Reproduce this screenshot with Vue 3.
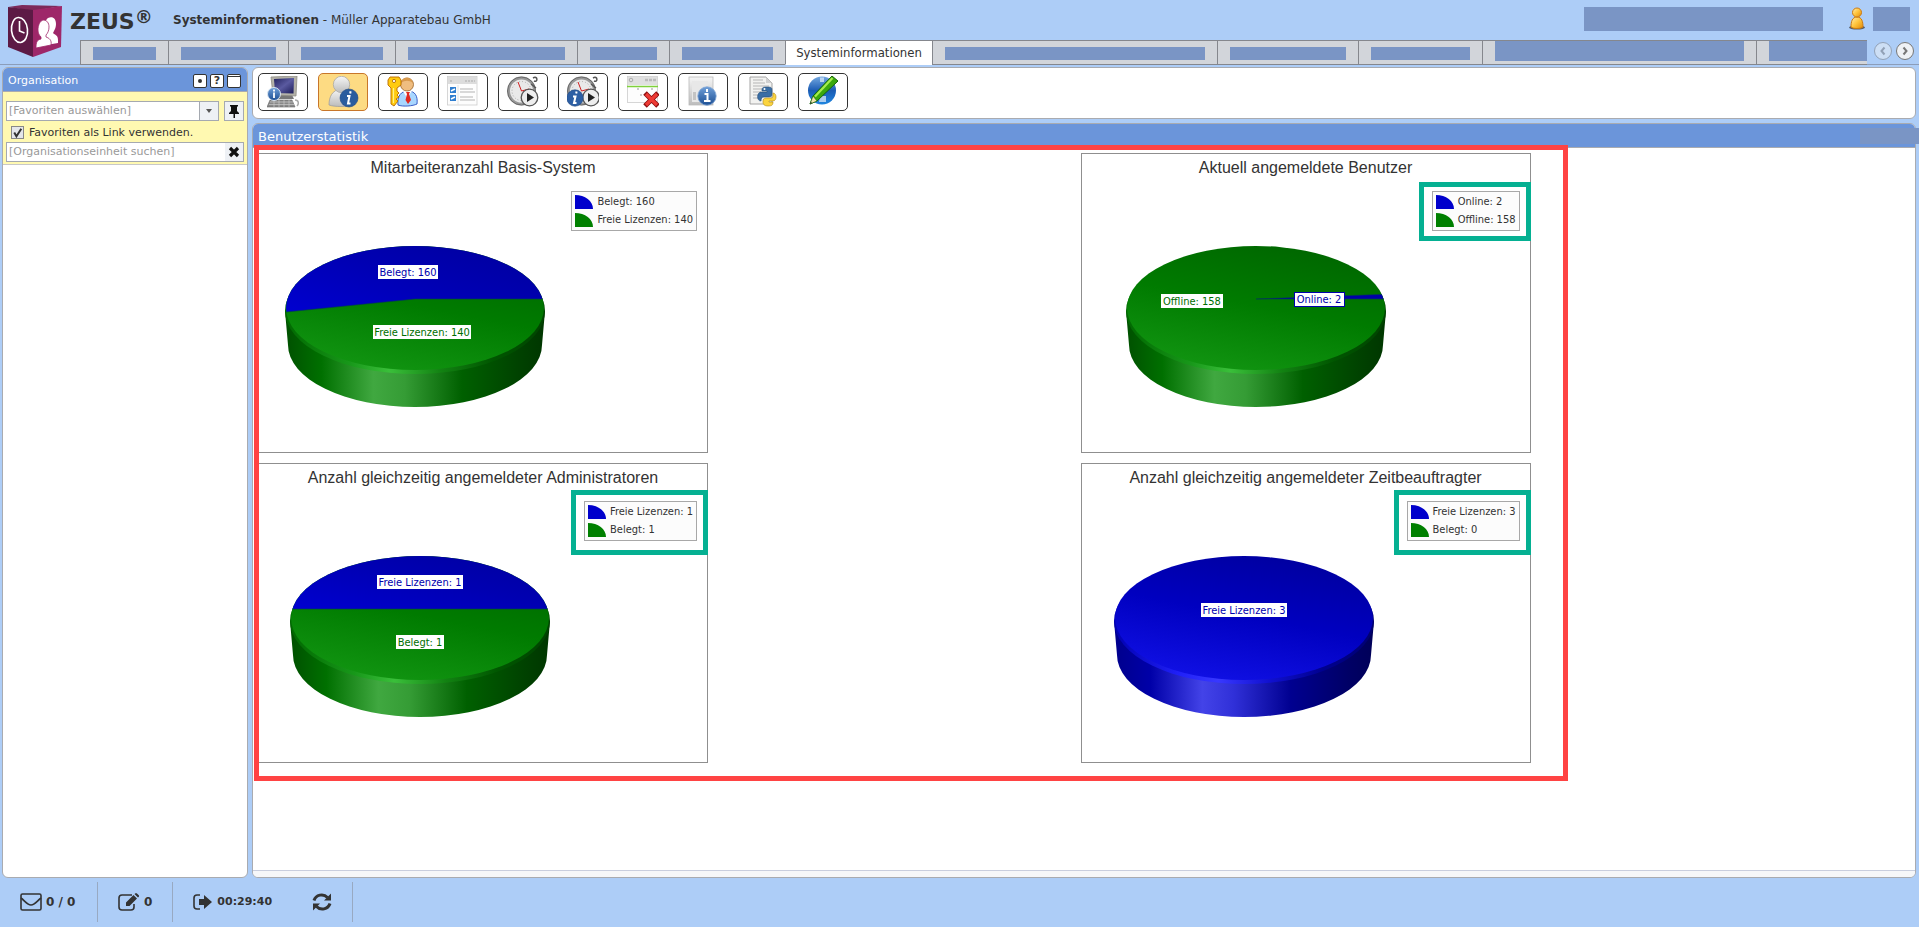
<script setup>
import { ref } from 'vue'

const tabs = [
  { bar: 63 }, { bar: 95 }, { bar: 82 }, { bar: 157 }, { bar: 67 }, { bar: 91 },
  { label: 'Systeminformationen' },
  { bar: 260 }, { bar: 116 }, { bar: 99 }, { bar: 249, tall: true }, { bar: 99, tall: true },
]

const tools = [
  'Systeminformationen', 'Benutzerstatistik', 'Lizenzen', 'Optionen', 'Jobs starten',
  'Jobinformationen', 'Fenster schließen', 'Serverinformationen', 'Skripte', 'Informationen bearbeiten',
]
const activeTool = ref(1)
const asLink = ref(true)
const search = ref('')

const charts = [
  {
    title: 'Mitarbeiteranzahl Basis-System', cx: 157, base: 'green',
    slice: 'M157 146H286V80H20V163L28 159Z',
    legend: ['Belegt: 160', 'Freie Lizenzen: 140'],
    labels: [
      { t: 'Belegt: 160', x: 150, y: 119, w: 60, c: 'blue' },
      { t: 'Freie Lizenzen: 140', x: 164, y: 179, w: 98, c: 'green' },
    ],
  },
  {
    title: 'Aktuell angemeldete Benutzer', cx: 175, base: 'green', mark: 'compact',
    slice: 'M175 146L310 141V146Z',
    legend: ['Online: 2', 'Offline: 158'],
    labels: [
      { t: 'Offline: 158', x: 111, y: 148, w: 62, c: 'green' },
      { t: 'Online: 2', x: 238, y: 146, w: 50, c: 'blue', framed: true },
    ],
  },
  {
    title: 'Anzahl gleichzeitig angemeldeter Administratoren', cx: 162, base: 'green', mark: 'tall',
    slice: 'M20 146H300V80H20Z',
    legend: ['Freie Lizenzen: 1', 'Belegt: 1'],
    labels: [
      { t: 'Freie Lizenzen: 1', x: 162, y: 119, w: 86, c: 'blue' },
      { t: 'Belegt: 1', x: 162, y: 179, w: 48, c: 'green' },
    ],
  },
  {
    title: 'Anzahl gleichzeitig angemeldeter Zeitbeauftragter', cx: 163, base: 'blue', mark: 'tall',
    slice: '',
    legend: ['Freie Lizenzen: 3', 'Belegt: 0'],
    labels: [{ t: 'Freie Lizenzen: 3', x: 163, y: 147, w: 86, c: 'blue' }],
  },
]
const ink = { blue: '#0000ad', green: '#006e00' }
const wall = (cx) =>
  `M${cx - 130} 158L${cx - 127} 192A127 62 0 0 0 ${cx + 127} 192L${cx + 130} 158Z`
</script>

<template>
  <div class="page">
    <svg class="defs" aria-hidden="true">
      <defs>
        <linearGradient id="wall-green"><stop offset="0" stop-color="#005000" /><stop offset=".14" stop-color="#007000" /><stop offset=".34" stop-color="#40a840" /><stop offset=".46" stop-color="#359c35" /><stop offset=".68" stop-color="#006000" /><stop offset=".9" stop-color="#004200" /><stop offset="1" stop-color="#003600" /></linearGradient>
        <linearGradient id="wall-blue"><stop offset="0" stop-color="#00008c" /><stop offset=".14" stop-color="#0000a8" /><stop offset=".34" stop-color="#4343e8" /><stop offset=".46" stop-color="#3030d8" /><stop offset=".68" stop-color="#000090" /><stop offset=".9" stop-color="#000066" /><stop offset="1" stop-color="#000058" /></linearGradient>
        <linearGradient id="rim-green"><stop offset="0" stop-color="#006800" /><stop offset=".25" stop-color="#18981a" /><stop offset=".4" stop-color="#3abf3a" /><stop offset=".6" stop-color="#128212" /><stop offset=".8" stop-color="#005600" /><stop offset="1" stop-color="#004400" /></linearGradient>
        <linearGradient id="rim-blue"><stop offset="0" stop-color="#0000b0" /><stop offset=".25" stop-color="#2020f8" /><stop offset=".4" stop-color="#3838ff" /><stop offset=".6" stop-color="#1010d0" /><stop offset=".8" stop-color="#000090" /><stop offset="1" stop-color="#000070" /></linearGradient>
        <linearGradient id="top-green" x1=".75" y1="0" x2=".35" y2="1"><stop offset="0" stop-color="#006600" /><stop offset=".5" stop-color="#007b00" /><stop offset="1" stop-color="#119411" /></linearGradient>
        <linearGradient id="top-blue" x1=".75" y1="0" x2=".35" y2="1"><stop offset="0" stop-color="#00009e" /><stop offset=".5" stop-color="#0000c0" /><stop offset="1" stop-color="#1010e4" /></linearGradient>
        <linearGradient id="slice-blue" x1="1" y1="0" x2="0" y2="1"><stop offset="0" stop-color="#000098" /><stop offset=".5" stop-color="#0000b2" /><stop offset="1" stop-color="#0000d2" /></linearGradient>
        <linearGradient id="info" x2="0" y2="1"><stop offset="0" stop-color="#6f9fd8" /><stop offset="1" stop-color="#1d4f94" /></linearGradient>
        <linearGradient id="globe" x2="0" y2="1"><stop offset="0" stop-color="#74a8e0" /><stop offset=".5" stop-color="#1b5cb4" /><stop offset="1" stop-color="#1f86e0" /></linearGradient>
        <linearGradient id="grey" x2="0" y2="1"><stop offset="0" stop-color="#f6f6f6" /><stop offset="1" stop-color="#bcbcbc" /></linearGradient>
        <linearGradient id="gold" x2="1" y2="1"><stop offset="0" stop-color="#fff0b0" /><stop offset=".5" stop-color="#ffc43c" /><stop offset="1" stop-color="#e08a08" /></linearGradient>
        <linearGradient id="screen" x2="1" y2="1"><stop offset="0" stop-color="#23235e" /><stop offset=".5" stop-color="#5a5aa0" /><stop offset="1" stop-color="#1c1c58" /></linearGradient>
      </defs>
    </svg>

    <header class="top">
      <svg class="logo" viewBox="0 0 56 54" aria-label="ZEUS Logo" role="img">
        <path d="M1 2L15 0L55 1L26 6Z" fill="#7d2a5b" />
        <path d="M1 2L26 5V52L1 42Z" fill="#5d1a45" />
        <path d="M26 5L55 1L54 42L26 52Z" fill="#9e2769" />
        <ellipse cx="12.500" cy="25" rx="8" ry="12.500" fill="none" stroke="#fff" stroke-width="1.600" transform="rotate(-6 12.500 25)" />
        <path d="M12.500 16V26L17.500 28" fill="none" stroke="#fff" stroke-width="1.600" />
        <path d="M41 13c5-2 8 1 8 6 0 3-1 5-2 7l-1 2c2 2 5 2 5 7v3l-12 2c-1-9-3-24 2-27Z" fill="#fff" />
        <path d="M36 15c4 0 6 3 6 7 0 3-1 6-3 8v2c3 1 6 3 5 8l-15 3c0-6 1-8 5-9v-2c-2-2-3-4-3-7 0-5 2-9 5-10Z" fill="#fff" stroke="#9e2769" stroke-width=".8" />
      </svg>
      <div class="right">
        <div class="headline">
          <div class="brand">ZEUS<span class="reg">®</span></div>
          <h1><b>Systeminformationen</b> - Müller Apparatebau GmbH</h1>
          <div class="account">
            <span class="hidden-text wide"></span>
            <svg class="person" viewBox="0 0 16 24" aria-hidden="true">
              <ellipse cx="8" cy="20.500" rx="8" ry="2" fill="#3a3a3a" opacity=".75" />
              <path d="M8 10C3 10 2 15 2 20c2 2 10 2 12 0 0-5-1-10-6-10Z" fill="url(#gold)" stroke="#cc7a10" />
              <circle cx="8" cy="5.500" r="4.500" fill="url(#gold)" stroke="#cc7a10" />
            </svg>
            <span class="hidden-text small"></span>
          </div>
        </div>
        <div class="tabrow">
          <nav class="tabs" aria-label="Bereiche">
            <a v-for="(t, i) in tabs" :key="i" href="#" class="tab" :class="{ active: t.label }">
              <template v-if="t.label">{{ t.label }}</template>
              <span v-else class="tabbar" :class="{ tall: t.tall }" :style="{ width: t.bar + 'px' }"></span>
            </a>
          </nav>
          <div class="scrollers">
            <button type="button" class="round off" aria-label="Zurück"><svg viewBox="0 0 16 16"><path d="M9.500 4.500L6.500 8L9.500 11.500" /></svg></button>
            <button type="button" class="round" aria-label="Weiter"><svg viewBox="0 0 16 16"><path d="M6.500 4.500L9.500 8L6.500 11.500" /></svg></button>
          </div>
        </div>
      </div>
    </header>

    <div class="body">
      <aside class="panel side">
        <div class="bar">
          <h2>Organisation</h2>
          <button type="button" class="mini" aria-label="Anzeigen"><svg viewBox="0 0 12 12"><circle cx="6" cy="6" r="2" fill="#333" /></svg></button>
          <button type="button" class="mini" aria-label="Hilfe">?</button>
          <button type="button" class="mini" aria-label="Fenster"><svg viewBox="0 0 12 12"><path d="M0 1.500H12" stroke="#333" stroke-width="1" /></svg></button>
        </div>
        <form class="filter" @submit.prevent>
          <div class="line">
            <div class="combo">
              <select aria-label="Favoriten"><option>[Favoriten auswählen]</option></select>
              <svg viewBox="0 0 18 18" aria-hidden="true"><path d="M6 7H12L9 11Z" fill="#555" /></svg>
            </div>
            <button type="button" class="pin" aria-label="Anheften">
              <svg viewBox="0 0 18 18"><path d="M5 3H13V4.500H12V9L14 11V12H10V16H8.500V12H4V11L6 9V4.500H5Z" fill="#111" /></svg>
            </button>
          </div>
          <label class="check">
            <input v-model="asLink" type="checkbox" />
            <svg viewBox="0 0 12 12" aria-hidden="true"><path v-if="asLink" d="M3 6L5 9.500L9.500 2.500" fill="none" stroke="#333" stroke-width="1.800" /></svg>
            Favoriten als Link verwenden.
          </label>
          <div class="search">
            <input v-model="search" type="text" placeholder="[Organisationseinheit suchen]" aria-label="Organisationseinheit suchen" />
            <button type="button" aria-label="Leeren" @click="search = ''"><svg viewBox="0 0 18 18"><path d="M5 5L13 13M13 5L5 13" stroke="#111" stroke-width="3.200" /></svg></button>
          </div>
        </form>
      </aside>

      <main class="main">
        <div class="panel toolbar">
          <button v-for="(name, i) in tools" :key="name" type="button" class="tool" :class="{ on: i === activeTool }" :aria-label="name" @click="activeTool = i">
            <svg viewBox="0 0 32 32">
              <g v-if="i === 0">
                <path d="M8 19H25L27 23H6Z" fill="#777" />
                <path d="M4 1L30 0L29 20L6 19Z" fill="#b4b2a8" stroke="#8e8c84" stroke-width=".8" />
                <path d="M7 3L27 2L26.500 17.500L8 17Z" fill="url(#screen)" />
                <path d="M3 24H25L28 31H0Z" fill="#888" stroke="#666" stroke-width=".6" /><path d="M3 26H26M2 28.500H27M7 24V31M12 24V31M17 24V31M22 24V31" stroke="#c8c8c8" stroke-width=".7" />
                <path d="M28 24c4 0 4 4 2 6" fill="none" stroke="#aaa" stroke-width="1.500" />
                <circle cx="7" cy="18" r="6.500" fill="url(#info)" stroke="#dbe6f2" stroke-width="1" /><path d="M7 13.500V15.500M7 16.500V22" stroke="#fff" stroke-width="1.800" />
              </g>
              <g v-else-if="i === 1">
                <path d="M14 13C5 14 2 21 2 29c5 2 19 2 24 0C26 20 22 14 14 13Z" fill="url(#grey)" stroke="#9a9a9a" stroke-width=".7" />
                <circle cx="14.500" cy="8.500" r="8.200" fill="url(#grey)" stroke="#a4a4a4" stroke-width=".7" />
                <circle cx="22" cy="22" r="9" fill="#2a5c9e" stroke="#1e4680" stroke-width=".6" /><path d="M20 20H22.500L21 27.500H23.500M23.600 15.300L23.200 17.500" stroke="#fff" stroke-width="2" fill="none" />
              </g>
              <g v-else-if="i === 2">
                <path d="M11 29C10 20 14 15 21 15s10 5 9 13c-4 2-14 3-19 1Z" fill="#a8d6ff" stroke="#2a4ec0" stroke-width=".9" />
                <path d="M16 15L20 22L25 15Z" fill="#fff" /><path d="M19 16H23L22 18L24 24L21 28L18.500 24L20 18Z" fill="#e02820" />
                <circle cx="20" cy="8.500" r="6.500" fill="#efbd80" stroke="#9a6224" stroke-width=".8" /><path d="M14 7c1-7 11-7 12 0-4-3-8-3-12 0Z" fill="#d99a4e" />
                <path d="M3 1H12L14 4V9L10 12V15L12 17L10 19L12 21L9 23L11 25L7 30L4 28V12L1 9V4Z" fill="#ffcb10" stroke="#b86a00" stroke-width=".9" />
                <circle cx="7" cy="5" r="1.600" fill="#fff" stroke="#a86000" stroke-width=".8" /><path d="M6.500 12V27" stroke="#fff08a" stroke-width="1.200" />
              </g>
              <g v-else-if="i === 3">
                <rect x=".5" y=".5" width="29.500" height="28.500" fill="#fdfdfd" stroke="#ccc" stroke-width=".8" /><path d="M1 1H30V8H1Z" fill="#dcdcdc" /><path d="M3 5H6M18 5H28" stroke="#bbb" stroke-width="1.500" stroke-dasharray="2 1" /><path d="M11 9V29" stroke="#ddd" stroke-width=".8" />
                <path d="M3 11H9V17H3ZM3 19H9V25H3Z" fill="#2f7ed0" /><path d="M4 15L8 13M4 23L8 21" stroke="#fff" stroke-width="1.500" /><path d="M13 13H26M13 16H28M13 21H26M13 24H28" stroke="#aaa" stroke-width=".9" />
              </g>
              <g v-else-if="i === 4 || i === 5">
                <circle cx="14.500" cy="15" r="13" fill="#e9e9e9" stroke="#999" stroke-width="3" /><circle cx="14.500" cy="15" r="14" fill="none" stroke="#555" stroke-width=".7" /><circle cx="14.500" cy="15" r="9.500" fill="none" stroke="#aaa" stroke-dasharray="1 2" />
                <path d="M14.500 15L11 6M14.500 15L22 13" stroke="#d02020" stroke-width="1" /><path d="M26 2c5-3 5 5 1 3M24 8L29 12" fill="none" stroke="#555" stroke-width="1.500" />
                <circle :cx="i === 4 ? 22.500 : 24" cy="21.500" r="8.300" fill="#eee" stroke="#555" stroke-width="1.300" /><path v-if="i === 4" d="M20 17L27 21.500L20 26Z" fill="#222" /><path v-else d="M21 17L28 21.500L21 26Z" fill="#222" />
                <template v-if="i === 5"><circle cx="8" cy="22" r="8.200" fill="#2d5fa4" stroke="#1e4680" stroke-width=".6" /><path d="M6 20.500H8.500L7 27H9.500M9.600 15.500L9.200 17.500" stroke="#fff" stroke-width="2" fill="none" /></template>
              </g>
              <g v-else-if="i === 6">
                <rect x=".5" y=".5" width="30" height="26" fill="#fdfdfd" stroke="#ccc" stroke-width=".8" /><path d="M1 1H30V9H1Z" fill="#e0e0e0" /><path d="M18 4H30" stroke="#bbb" stroke-width="2.500" stroke-dasharray="3 1" /><circle cx="4" cy="4" r="1.800" fill="none" stroke="#aaa" /><path d="M0 10.500H31" stroke="#7fd13b" stroke-width="1.500" />
                <path d="M11 12V14M14 18V20M25 12V14" stroke="#999" stroke-width="1" /><path d="M18 17L31 30M31 17L18 30" stroke="#8d1010" stroke-width="5" /><path d="M19 18L30 29M30 18L19 29" stroke="#ee3a34" stroke-width="3.200" />
              </g>
              <g v-else-if="i === 7">
                <rect x="2" y="1" width="24" height="28" fill="url(#grey)" stroke="#bbb" stroke-width=".8" /><rect x="5" y="5" width="16" height="21" fill="#e8e8e8" /><path d="M6 16H9V24H6Z" fill="#c4c4c4" />
                <circle cx="20" cy="20" r="9.200" fill="url(#info)" stroke="#7fa5d4" stroke-width=".8" /><path d="M20 13V16M17.500 18H20.500V25M17 25H23.500" stroke="#fff" stroke-width="2" fill="none" />
              </g>
              <g v-else-if="i === 8">
                <path d="M3 1H19L25 7V28H3Z" fill="#f2f2f0" stroke="#9a9a9a" stroke-width=".9" /><path d="M19 1V7H25Z" fill="#d0d0d0" /><path d="M6 4H16M6 7H18M6 10H22M6 13H22M6 16H14M6 19H12M6 22H12" stroke="#b5b5b5" stroke-width="1" />
                <path d="M20 11c5 0 5 1 5 4v3c0 2-1 3-3 3h-5c-2 0-3 1-3 4-5 0-4-9 0-9h6v-1h-5c0-3 0-4 5-4Z" fill="#3a6ea5" stroke="#244a74" stroke-width=".6" /><circle cx="17.500" cy="13" r="1" fill="#fff" />
                <path d="M26 17c4 0 4 8 0 8h-4v1h4c0 3-1 4-5 4s-5-2-5-4c0-3 1-4 3-4h5c2 0 2-1 2-5Z" fill="#fbd43f" stroke="#b08a1a" stroke-width=".6" />
              </g>
              <g v-else>
                <circle cx="15" cy="14.500" r="14" fill="url(#globe)" /><path d="M13 1.500H17V6H13ZM13 20H19V26H12Z" fill="#cfe2f6" opacity=".8" />
                <path d="M25 0L31 5L10 25L3 28L6 20Z" fill="#3aa80c" stroke="#14640a" stroke-width="1" /><path d="M25.500 2L8 20.500" stroke="#a6ec50" stroke-width="2.200" /><path d="M6 20L10 25L3 28Z" fill="#f2e2b0" stroke="#14640a" stroke-width=".6" /><path d="M4 26L5 27L3 28Z" fill="#222" />
              </g>
            </svg>
          </button>
        </div>

        <section class="panel content">
          <div class="bar">
            <h2>Benutzerstatistik</h2>
            <span class="barpatch"></span>
          </div>
          <div class="stats">
            <figure v-for="(c, i) in charts" :key="i" class="chart">
              <figcaption>{{ c.title }}</figcaption>
              <ul class="legend" :class="c.mark">
                <li v-for="(l, k) in c.legend" :key="l">
                  <svg viewBox="0 0 18 14" aria-hidden="true"><path d="M0 0C10 0 18 6 18 14H0Z" :fill="k ? '#008000' : '#0000cc'" /></svg>{{ l }}
                </li>
              </ul>
              <svg class="pie" viewBox="0 0 450 300" role="img" :aria-label="c.title">
                <clipPath :id="'face' + i"><ellipse :cx="c.cx" cy="155" rx="129" ry="62" /></clipPath>
                <path :d="wall(c.cx)" :fill="`url(#wall-${c.base})`" />
                <ellipse :cx="c.cx" cy="158" rx="130" ry="63" :fill="`url(#rim-${c.base})`" />
                <ellipse :cx="c.cx" cy="155" rx="129" ry="62" :fill="`url(#top-${c.base})`" />
                <g v-if="c.slice" :clip-path="`url(#face${i})`">
                  <path :d="c.slice" :fill="i === 1 ? '#0000a8' : 'url(#slice-blue)'" stroke="#003c50" stroke-width=".6" />
                </g>
                <g v-for="l in c.labels" :key="l.t">
                  <rect class="tag" :x="l.x - l.w / 2" :y="l.y - 7" :width="l.w" height="14" fill="#fff" :stroke="l.framed ? ink.blue : 'none'" />
                  <text :x="l.x" :y="l.y + 4" text-anchor="middle" :fill="ink[l.c]">{{ l.t }}</text>
                </g>
              </svg>
            </figure>
          </div>
          <div class="status"></div>
        </section>
      </main>
    </div>

    <footer class="foot">
      <a href="#" class="cell mail">
        <svg class="ico wide-ico" viewBox="0 0 22 18"><rect x="1" y="1" width="20" height="16" rx="1.500" fill="none" stroke="#333" stroke-width="1.600" /><path d="M1 5C5 8 7 12 11 12S17 8 21 5" fill="none" stroke="#333" stroke-width="1.600" /></svg>0 / 0
      </a>
      <a href="#" class="cell">
        <svg class="ico wide-ico" viewBox="0 0 22 18"><path d="M14 2H4Q1 2 1 5V14Q1 17 4 17H13Q16 17 16 14V11" fill="none" stroke="#333" stroke-width="1.600" /><path d="M8 13V9.500L15.500 2L19 5.500L11.500 13ZM16.500 1L18 0Q19 0 21 2.500Q21.500 3.500 20 4.500Z" fill="#333" /></svg>0
      </a>
      <div class="cell">
        <a href="#" class="cell-link">
          <svg class="ico" viewBox="0 0 20 18"><path d="M7 2H4Q1 2 1 5V13Q1 16 4 16H7" fill="none" stroke="#333" stroke-width="1.600" /><path d="M6 6H11V2L19 9L11 16V12H6Z" fill="#333" /></svg>00:29:40
        </a>
        <button type="button" class="reload" aria-label="Aktualisieren">
          <svg class="ico" viewBox="0 0 20 18"><path d="M2 7.500A8 8 0 0 1 15.500 4.500M18 10.500A8 8 0 0 1 4.500 13.500" fill="none" stroke="#333" stroke-width="3" /><path d="M19 .5V7.500H12ZM1 17.500V10.500H8Z" fill="#333" /></svg>
        </button>
      </div>
    </footer>
  </div>
</template>

<style>
body {
  margin: 0;
}
</style>

<style scoped>
.page {
  display: flex;
  flex-direction: column;
  min-height: 100vh;
  background: #adcdf7;
  color: #333;
  font: 12px/16px "DejaVu Sans", Verdana, sans-serif;
  overflow: hidden;
}
.page *, .page *::after { box-sizing: border-box; }
h1, h2, ul, figure { margin: 0; padding: 0; font-weight: normal; }
button, input, select { font: inherit; color: inherit; margin: 0; padding: 0; }
button { cursor: pointer; }
a { color: inherit; text-decoration: none; }
svg { display: block; }
.defs { position: absolute; width: 0; height: 0; }

.top { display: flex; height: 65px; border-bottom: 1px solid #8c9db9; }
.logo { width: 56px; height: 54px; margin: 5px 17px 0 7px; flex: none; }
.right { flex: 1; min-width: 0; display: flex; flex-direction: column; }
.headline { flex: 1; display: flex; align-items: flex-start; padding: 7px 9px 0 0; margin-left: -10px; }
.brand { width: 103px; display: flex; font-size: 22px; line-height: 30px; font-weight: bold; }
.reg { font-size: 18px; line-height: 20px; }
h1 { font-size: 12px; line-height: 26px; }
.account { margin-left: auto; display: flex; }
.hidden-text { height: 24px; background: #7a95c5; }
.wide { width: 239px; }
.small { width: 37px; }
.person { width: 16px; height: 24px; margin: 0 8px 0 26px; }
.tabrow { display: flex; height: 25px; margin-bottom: -1px; }
.tabs { flex: 1; min-width: 0; display: flex; overflow: hidden; }
.tab {
  flex: none;
  display: flex;
  align-items: center;
  justify-content: center;
  padding: 0 12px;
  border: solid #85878d;
  border-width: 1px 0 1px 1px;
  background: #d2d5da;
  font: 13px/16px "DejaVu Sans Condensed", "DejaVu Sans", Tahoma, sans-serif;
  font-stretch: condensed;
}
.tab.active { width: 147px; padding: 0; background: #fff; border-bottom-color: #fff; }
.tab:last-child { padding-right: 0; }
.tabbar { height: 13px; background: #7a95c5; margin-top: 2px; }
.tabbar.tall { height: 20px; margin: 0 0 3px; }
.scrollers { flex: none; display: flex; gap: 4px; align-items: center; padding: 0 5px 4px 7px; }
.round { width: 18px; height: 18px; border: 1px solid #777; border-radius: 9px; background: #eef1f5; }
.round svg { width: 16px; height: 16px; fill: none; stroke: #777; stroke-width: 2; }
.round.off { opacity: .5; }

.body { flex: 1; display: flex; gap: 4px; padding: 2px 3px 0 2px; }
.panel { background: #fff; border: 1px solid #a9abb0; border-radius: 6px; }
.side { width: 246px; flex: none; font-size: 11px; }
.bar {
  display: flex;
  align-items: center;
  gap: 3px;
  height: 24px;
  padding: 2px 6px 0 5px;
  background: #6b95da;
  border-bottom: 1px solid #a9abb0;
  border-radius: 5px 5px 0 0;
  color: #fff;
}
.bar h2 { flex: 1; font-size: 11px; line-height: 16px; }
.mini {
  width: 14px; height: 14px;
  border: 1px solid #333; border-radius: 2px;
  background: #fff; color: #333;
  font-size: 11px; line-height: 12px; font-weight: bold;
}
.mini svg { width: 12px; height: 12px; }
.filter { background: #fff9b1; border-bottom: 1px solid #c8c8c8; padding: 9px 3px 2px; }
.line { display: flex; gap: 5px; }
.combo { flex: 1; position: relative; height: 20px; }
.combo select {
  width: 100%; height: 20px; padding: 0 2px;
  appearance: none; border: 1px solid #a5a9b0; border-radius: 0; background: #fff; color: #999;
}
.combo svg {
  position: absolute; right: 1px; top: 1px; width: 19px; height: 18px;
  border-left: 1px solid #a5a9b0; background: #eef1f5; pointer-events: none;
}
.pin { width: 20px; height: 20px; border: 1px solid #a5a9b0; background: #eef1f5; }
.pin svg, .search svg { width: 18px; height: 18px; }
.check { position: relative; display: flex; align-items: center; gap: 5px; height: 21px; padding: 2px 0 0 5px; }
.check input { appearance: none; width: 13px; height: 13px; border: 1px solid #888; background: #e4e6ea; }
.check svg { position: absolute; left: 5px; top: 5px; width: 13px; height: 13px; pointer-events: none; }
.search { display: flex; height: 20px; border: 1px solid #a5a9b0; background: #fff; }
.search input { flex: 1; min-width: 0; border: 0; padding: 0 2px; outline: none; background: none; }
.search input::placeholder { color: #999; opacity: 1; }
.search button { width: 18px; height: 18px; border: 0; background: #eef1f5; }

.main { flex: 1; min-width: 0; display: flex; flex-direction: column; gap: 4px; }
.toolbar { display: flex; gap: 10px; height: 52px; padding: 5px; }
.tool {
  display: flex; justify-content: center; align-items: center;
  width: 50px; height: 38px;
  border: 1px solid #333; border-radius: 5px; background: #fff;
}
.tool.on { background: #fddb83; border-color: #c8762a; }
.tool svg { width: 32px; height: 32px; }
.content { flex: 1; display: flex; flex-direction: column; }
.content .bar { padding: 3px 0 0 5px; }
.content h2 { font-size: 13px; }
.barpatch { width: 59px; height: 16px; margin: -3px -4px 0 0; background: #7a95c5; }
.stats {
  position: relative;
  flex: 1;
  display: grid;
  grid-template-columns: 1fr 1fr;
  align-content: start;
  row-gap: 10px;
  padding: 5px 12px 0 5px;
}
.stats::after {
  content: "";
  position: absolute;
  left: 1px; right: 347px; top: -3px; height: 636px;
  border: 5px solid #ff4343;
  pointer-events: none;
}
.chart {
  position: relative;
  display: flex;
  flex-direction: column;
  width: 450px; height: 300px;
  border: 1px solid #8f8f8f;
}
.chart figcaption { font: 16px/20px "Liberation Sans", Arial, sans-serif; text-align: center; padding-top: 4px; }
.legend {
  position: relative;
  z-index: 1;
  align-self: flex-end;
  margin: 13px 10px 0 0;
  padding: 1px 3px;
  border: 1px solid #a8a8a8;
  background: #fcfcfc;
  list-style: none;
}
.legend li {
  display: flex; align-items: center; gap: 4px; height: 18px;
  font: 11px/18px "DejaVu Sans Condensed", "DejaVu Sans", Tahoma, sans-serif;
  font-stretch: condensed;
}
.legend svg { width: 18px; height: 14px; }
.legend.compact::after, .legend.tall::after {
  content: "";
  position: absolute;
  inset: -10px -12px -11px -14px;
  border: 5px solid #05b092;
}
.legend.tall::after { inset: -12px -12px -15px -14px; }
.pie { position: absolute; left: -1px; top: -1px; width: 450px; height: 300px; }
.pie text { font: 11px "DejaVu Sans Condensed", "DejaVu Sans", Tahoma, sans-serif; font-stretch: condensed; }
.tag { shape-rendering: crispEdges; }
.status { height: 7px; border-top: 1px solid #c9cede; background: #f6f7f9; border-radius: 0 0 5px 5px; }

.foot { display: flex; height: 49px; padding: 4px 0 5px; font-weight: bold; }
.cell { display: flex; align-items: center; gap: 4px; padding: 0 20px; border-right: 1px solid #98a9c2; }
.mail { min-width: 98px; }
.cell-link { display: flex; align-items: center; gap: 4px; font-size: 11px; }
.ico { width: 20px; height: 18px; }
.wide-ico { width: 22px; }
.reload { border: 0; background: none; margin-left: 36px; }
</style>
